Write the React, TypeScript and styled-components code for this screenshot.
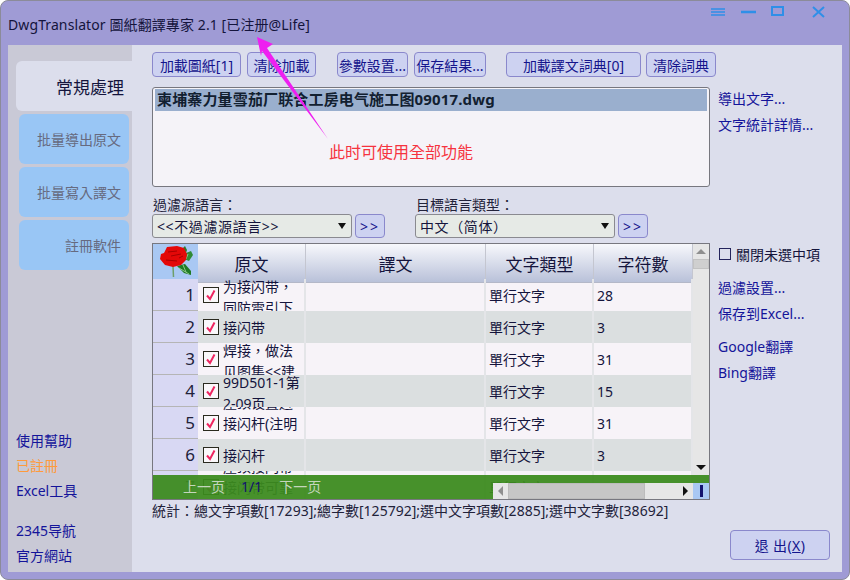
import * as React from 'react';
import styled, { createGlobalStyle } from 'styled-components';

const GlobalStyle = createGlobalStyle`
    html, body {
        margin: 0;
        padding: 0;
        background: #fff;
    }
    body {
        font-family: "Noto Sans", "Noto Sans CJK TC", sans-serif;
        font-size: 14px;
    }
`;

const Window = styled.div`
    position: relative;
    box-sizing: border-box;
    width: 850px;
    height: 580px;
    display: flex;
    flex-direction: column;
    background: #9f9bd5;
    border: 1px solid #8b8b99;
    border-radius: 8px;
    overflow: hidden;
`;

const TitleBar = styled.header`
    height: 44px;
    flex: none;
    display: flex;
    align-items: flex-start;
    justify-content: space-between;
`;

const Title = styled.h1`
    margin: 13px 0 0 7px;
    font-size: 14px;
    line-height: 22px;
    font-weight: 400;
    letter-spacing: 0.1px;
    color: #14143c;
`;

const Controls = styled.div`
    display: flex;
    align-items: flex-start;
    margin: 4px 24px 0 0;
`;

const ControlIcon = styled.svg<{ $gap: number }>`
    display: block;
    margin-left: ${(p) => p.$gap}px;
`;

const Body = styled.div`
    flex: 1;
    display: flex;
    margin: 0 7px 7px 7px;
    min-height: 0;
`;

const Sidebar = styled.aside`
    width: 124px;
    flex: none;
    display: flex;
    flex-direction: column;
    align-items: flex-end;
    background: #c9c9d6;
    padding-top: 16px;
    box-sizing: border-box;
`;

const ActiveTab = styled.div`
    box-sizing: border-box;
    width: 116px;
    height: 50px;
    padding-right: 8px;
    display: flex;
    align-items: center;
    justify-content: flex-end;
    background: #dcdeec;
    border-radius: 6px 0 0 6px;
    font-size: 17px;
    color: #14143c;
`;

const Tab = styled.div`
    box-sizing: border-box;
    width: 110px;
    height: 50px;
    margin: 3px 3px 0 0;
    padding-right: 8px;
    display: flex;
    align-items: center;
    justify-content: flex-end;
    background: #99c6f5;
    border-radius: 6px;
    color: #666a80;
`;

const SideLinks = styled.nav`
    margin-top: auto;
    align-self: stretch;
    padding: 0 0 4px 8px;
`;

const SideLink = styled.div<{ $orange?: boolean; $spaced?: boolean }>`
    line-height: 25px;
    margin-top: ${(p) => (p.$spaced ? 15 : 0)}px;
    color: ${(p) => (p.$orange ? '#ff9a3c' : '#14149a')};
`;

const Main = styled.main`
    flex: 1;
    background: #dcdeec;
    padding: 7px 0 0 20px;
    display: grid;
    grid-template-columns: 558px 1fr;
    grid-template-rows: 25px 110px 56px 257px auto;
    column-gap: 8px;
    align-content: start;
`;

const Toolbar = styled.div`
    grid-column: 1 / 3;
    display: flex;
`;

const Button = styled.button<{ $w: number; $gap?: number }>`
    box-sizing: border-box;
    width: ${(p) => p.$w}px;
    margin-left: ${(p) => p.$gap ?? 0}px;
    padding: 0;
    font: inherit;
    white-space: nowrap;
    color: #14148c;
    background: #cdd2f1;
    border: 1px solid #8a88cc;
    border-radius: 4px;
`;

const ListBox = styled.div`
    box-sizing: border-box;
    margin-top: 10px;
    height: 100px;
    padding: 1px 2px;
    background: #f5f3f8;
    border: 1px solid #77777f;
    border-radius: 3px;
`;

const ListItem = styled.div`
    height: 22px;
    line-height: 20px;
    padding-left: 2px;
    font-weight: 700;
    font-size: 15px;
    letter-spacing: 0.15px;
    color: #122030;
    background: #9aafce;
`;

const LinkColumn = styled.div`
    padding-top: 9px;
`;

const Link = styled.div`
    line-height: 26px;
    color: #14149a;
    white-space: nowrap;
`;

const FilterRow = styled.div`
    grid-column: 1 / 3;
    display: flex;
    padding-top: 9px;
`;

const FilterGroup = styled.div<{ $gap?: number }>`
    margin-left: ${(p) => p.$gap ?? 0}px;
`;

const FilterLabel = styled.div`
    height: 18px;
    line-height: 18px;
    padding-left: 1px;
    color: #22223a;
`;

const FilterControls = styled.div`
    display: flex;
    height: 24px;
    gap: 3px;
`;

const Combo = styled.div`
    box-sizing: border-box;
    width: 200px;
    padding: 0 4px;
    display: flex;
    align-items: center;
    justify-content: space-between;
    color: #14143c;
    letter-spacing: 0.6px;
    background: #e6eae6;
    border: 1px solid #8a8a90;
    border-radius: 3px;
`;

const ComboArrow = styled.span`
    width: 0;
    height: 0;
    border-left: 4.5px solid transparent;
    border-right: 4.5px solid transparent;
    border-top: 6px solid #111;
    margin-right: 1px;
`;

const MoreButton = styled(Button)`
    letter-spacing: 2px;
`;

const Table = styled.div`
    position: relative;
    box-sizing: border-box;
    height: 257px;
    border: 1px solid #77777f;
    background: #e6e6e6;
    overflow: hidden;
    display: flex;
`;

const Grid = styled.div`
    width: 540px;
    flex: none;
`;

const COLUMNS = '45px 108px 180px 108px 99px';

const HeaderRow = styled.div`
    display: grid;
    grid-template-columns: ${COLUMNS};
    height: 35px;
`;

const Corner = styled.div`
    background: #a9c8f3;
`;

const HeaderCell = styled.div`
    display: flex;
    align-items: center;
    justify-content: center;
    font-size: 17px;
    color: #14143c;
    background: linear-gradient(#f7f8fc, #b9c1d9);
    border-right: 1px solid #c4c6d0;
    border-bottom: 1px solid #b4b8c8;
    box-sizing: border-box;
`;

const Row = styled.div<{ $even: boolean }>`
    display: grid;
    grid-template-columns: ${COLUMNS};
    height: 32px;
    background: ${(p) => (p.$even ? '#dbdfe0' : '#f7f3f8')};
`;

const RowNumber = styled.div`
    box-sizing: border-box;
    display: flex;
    align-items: center;
    justify-content: flex-end;
    padding-right: 3px;
    font-size: 17px;
    color: #22223a;
    background: #d8d8f3;
    border-bottom: 1px solid #b5b5b5;
`;

const Cell = styled.div`
    box-sizing: border-box;
    display: flex;
    align-items: center;
    padding-left: 3px;
    overflow: hidden;
    color: #14143c;
    border-right: 2px solid #e4e5e8;
`;

const SourceCell = styled(Cell)`
    gap: 4px;
    padding-left: 4px;
`;

const CheckBox = styled.svg`
    flex: none;
    margin-left: 1px;
`;

// two wrapped lines sit slightly low in their row, the second one runs into the row below
const SourceLines = styled.div<{ $wrapped: boolean }>`
    flex: none;
    white-space: nowrap;
    padding-top: ${(p) => (p.$wrapped ? 4 : 0)}px;
`;

const SourceLine = styled.div`
    height: 21px;
    line-height: 21px;
`;

const VScroll = styled.div`
    width: 16px;
    height: 231px;
    display: flex;
    flex-direction: column;
    background: #e6e6e6;
`;

const ScrollButton = styled.div`
    height: 15px;
    flex: none;
    display: flex;
    align-items: center;
    justify-content: center;
`;

const VThumb = styled.div`
    box-sizing: border-box;
    height: 10px;
    background: #cfcfcf;
    border: 1px solid #c2c2c2;
`;

const VTrack = styled.div`
    flex: 1;
`;

const Triangle = styled.span<{ $dir: 'up' | 'down' | 'left' | 'right'; $color: string }>`
    width: 0;
    height: 0;
    border-style: solid;
    border-color: transparent;
    ${(p) =>
        p.$dir === 'up' || p.$dir === 'down'
            ? `border-width: ${p.$dir === 'up' ? '0 5px 5px' : '5px 5px 0'};`
            : `border-width: ${p.$dir === 'left' ? '5px 5px 5px 0' : '5px 0 5px 5px'};`}
    ${(p) => `border-${{ up: 'bottom', down: 'top', left: 'right', right: 'left' }[p.$dir]}-color: ${p.$color};`}
`;

const PagerBar = styled.div`
    position: absolute;
    left: 0;
    right: 0;
    bottom: 0;
    height: 24px;
    display: flex;
    background: rgba(60, 138, 30, 0.94);
`;

const PagerLink = styled.span<{ $left: number }>`
    margin-left: ${(p) => p.$left}px;
    line-height: 24px;
    color: #c4d6bc;
    white-space: nowrap;
`;

const PagerCount = styled.span<{ $left: number }>`
    margin-left: ${(p) => p.$left}px;
    line-height: 24px;
    color: #12126e;
`;

const HScroll = styled.div`
    margin-left: auto;
    align-self: flex-end;
    width: 216px;
    height: 16px;
    display: flex;
    background: #e6e6e6;
`;

const HButton = styled.div`
    width: 15px;
    flex: none;
    display: flex;
    align-items: center;
    justify-content: center;
`;

const HThumb = styled.div`
    box-sizing: border-box;
    width: 137px;
    background: #c6c6c6;
    border: 1px solid #bcbcbc;
`;

const HTrack = styled.div`
    flex: 1;
`;

const ScrollCorner = styled.div`
    width: 16px;
    flex: none;
    display: flex;
    align-items: center;
    justify-content: center;
    background: #a9c8f3;
    &::after {
        content: '';
        width: 3px;
        height: 12px;
        background: #12126e;
    }
`;

const SideColumn = styled.div`
    padding-top: 0;
`;

const ToggleRow = styled.div`
    display: flex;
    align-items: center;
    gap: 5px;
    height: 22px;
    margin-bottom: 10px;
    color: #14143c;
`;

const ToggleBox = styled.span`
    box-sizing: border-box;
    width: 12px;
    height: 12px;
    margin-left: 1px;
    border: 1px solid #24245c;
`;

const LinkGroup = styled.div`
    margin-bottom: 7px;
`;

const Footer = styled.div`
    grid-column: 1 / 3;
    display: flex;
    flex-direction: column;
`;

const Stats = styled.div`
    line-height: 22px;
    color: #22223a;
    white-space: nowrap;
`;

const ExitButton = styled(Button)`
    height: 30px;
    margin: 8px 0 0 578px;
    letter-spacing: 0.4px;
`;

const Annotation = styled.div`
    position: absolute;
    left: 328px;
    top: 138px;
    font-size: 16px;
    line-height: 26px;
    color: #f5333f;
    white-space: nowrap;
`;

const ArrowDrawing = styled.svg`
    position: absolute;
    left: 250px;
    top: 30px;
`;

const rows = [
    { no: 1, lines: ['为接闪带，', '同防雷引下'], count: '28' },
    { no: 2, lines: ['接闪带'], count: '3' },
    { no: 3, lines: ['焊接，做法', '见图集<<建'], count: '31' },
    { no: 4, lines: ['99D501-1第', '2-09页_'], count: '15' },
    { no: 5, lines: ['屋顶设置避', '接闪杆(注明', ''], count: '31' },
    { no: 6, lines: ['接闪杆'], count: '3' },
    { no: 7, lines: ['屋顶接闪带', '接闪带可靠', ''], count: '12' },
];

const Rose = () => (
    <svg width="45" height="35" viewBox="0 0 45 35">
        <path d="M20 22 L20.5 33" stroke="#6f9f6a" strokeWidth="1.5" fill="none" />
        <path d="M29 5 L32 2 L34 6 L33 9 L29 8 Z" fill="#2c7a2c" />
        <path d="M33 9 L38 7 L40 11 L36 17 L31 15 Z" fill="#2f8a35" />
        <path d="M24 22 L32 20 L38 27 L38 31 L31 29 Z" fill="#1f7a24" />
        <path d="M26 24 L36 30 M30 21 L33 28 M35 10 L33 15" stroke="#a8d8a0" strokeWidth="0.8" fill="none" />
        <path
            d="M14 3 L24 2 L31 4 L34 10 L33 16 L28 21 L20 23 L12 21 L7 15 L8 10 L11 9 Z"
            fill="#e40808"
        />
        <path d="M15 8 L24 7 M18 12 L28 10 M13 16 L24 17 M26 14 L30 12" stroke="#a80000" strokeWidth="1" fill="none" />
    </svg>
);

const Check = () => (
    <CheckBox width="16" height="16" viewBox="0 0 16 16">
        <rect x="0.5" y="0.5" width="15" height="15" fill="#faf8fa" stroke="#2a2a1e" />
        <path d="M4 8.5 L7 12 L11.5 3.5" fill="none" stroke="#ee2560" strokeWidth="2" />
    </CheckBox>
);

function App() {
    return (
        <Window>
            <GlobalStyle />
            <TitleBar>
                <Title>DwgTranslator 圖紙翻譯專家 2.1 [已注册@Life]</Title>
                <Controls>
                    <ControlIcon $gap={0} width="14" height="12" viewBox="0 0 14 12">
                        <path d="M0 4h14M0 7h14M0 10h14" stroke="#2f8fe8" strokeWidth="1.4" />
                    </ControlIcon>
                    <ControlIcon $gap={16} width="15" height="12" viewBox="0 0 15 12">
                        <path d="M0 7h15" stroke="#2f8fe8" strokeWidth="2.5" />
                    </ControlIcon>
                    <ControlIcon $gap={15} width="13" height="12" viewBox="0 0 13 12">
                        <rect x="1" y="2" width="11" height="8" fill="none" stroke="#2f8fe8" strokeWidth="2" />
                    </ControlIcon>
                    <ControlIcon $gap={28} width="13" height="13" viewBox="0 0 13 13">
                        <path d="M1 2l11 10M12 2L1 12" stroke="#2f8fe8" strokeWidth="2" />
                    </ControlIcon>
                </Controls>
            </TitleBar>
            <Body>
                <Sidebar>
                    <ActiveTab>常規處理</ActiveTab>
                    <Tab>批量導出原文</Tab>
                    <Tab>批量寫入譯文</Tab>
                    <Tab>註冊軟件</Tab>
                    <SideLinks>
                        <SideLink>使用幫助</SideLink>
                        <SideLink $orange>已註冊</SideLink>
                        <SideLink>Excel工具</SideLink>
                        <SideLink $spaced>2345导航</SideLink>
                        <SideLink>官方網站</SideLink>
                    </SideLinks>
                </Sidebar>
                <Main>
                    <Toolbar>
                        <Button $w={89}>加載圖紙[1]</Button>
                        <Button $w={69} $gap={6}>清除加載</Button>
                        <Button $w={71} $gap={21}>參數設置...</Button>
                        <Button $w={72} $gap={6}>保存結果...</Button>
                        <Button $w={135} $gap={20}>加載譯文詞典[0]</Button>
                        <Button $w={70} $gap={5}>清除詞典</Button>
                    </Toolbar>
                    <ListBox>
                        <ListItem>柬埔寨力量雪茄厂联合工房电气施工图09017.dwg</ListItem>
                    </ListBox>
                    <LinkColumn>
                        <Link>導出文字...</Link>
                        <Link>文字統計詳情...</Link>
                    </LinkColumn>
                    <FilterRow>
                        <FilterGroup>
                            <FilterLabel>過濾源語言：</FilterLabel>
                            <FilterControls>
                                <Combo>
                                    &lt;&lt;不過濾源語言&gt;&gt;
                                    <ComboArrow />
                                </Combo>
                                <MoreButton $w={30}>&gt;&gt;</MoreButton>
                            </FilterControls>
                        </FilterGroup>
                        <FilterGroup $gap={30}>
                            <FilterLabel>目標語言類型：</FilterLabel>
                            <FilterControls>
                                <Combo>
                                    中文（简体）
                                    <ComboArrow />
                                </Combo>
                                <MoreButton $w={30}>&gt;&gt;</MoreButton>
                            </FilterControls>
                        </FilterGroup>
                    </FilterRow>
                    <Table>
                        <Grid>
                            <HeaderRow>
                                <Corner>
                                    <Rose />
                                </Corner>
                                <HeaderCell>原文</HeaderCell>
                                <HeaderCell>譯文</HeaderCell>
                                <HeaderCell>文字類型</HeaderCell>
                                <HeaderCell>字符數</HeaderCell>
                            </HeaderRow>
                            {rows.map((row) => (
                                <Row key={row.no} $even={row.no % 2 === 0}>
                                    <RowNumber>{row.no}</RowNumber>
                                    <SourceCell>
                                        <Check />
                                        <SourceLines $wrapped={row.lines.length === 2}>
                                            {row.lines.map((line, i) => (
                                                <SourceLine key={i}>{line}</SourceLine>
                                            ))}
                                        </SourceLines>
                                    </SourceCell>
                                    <Cell />
                                    <Cell>單行文字</Cell>
                                    <Cell>{row.count}</Cell>
                                </Row>
                            ))}
                        </Grid>
                        <VScroll>
                            <ScrollButton>
                                <Triangle $dir="up" $color="#8f8f8f" />
                            </ScrollButton>
                            <VThumb />
                            <VTrack />
                            <ScrollButton>
                                <Triangle $dir="down" $color="#111" />
                            </ScrollButton>
                        </VScroll>
                        <PagerBar>
                            <PagerLink $left={30}>上一页</PagerLink>
                            <PagerCount $left={16}>1/1</PagerCount>
                            <PagerLink $left={17}>下一页</PagerLink>
                            <HScroll>
                                <HButton>
                                    <Triangle $dir="left" $color="#8f8f8f" />
                                </HButton>
                                <HThumb />
                                <HTrack />
                                <HButton>
                                    <Triangle $dir="right" $color="#111" />
                                </HButton>
                                <ScrollCorner />
                            </HScroll>
                        </PagerBar>
                    </Table>
                    <SideColumn>
                        <ToggleRow>
                            <ToggleBox />
                            關閉未選中項
                        </ToggleRow>
                        <LinkGroup>
                            <Link>過濾設置...</Link>
                            <Link>保存到Excel...</Link>
                        </LinkGroup>
                        <Link>Google翻譯</Link>
                        <Link>Bing翻譯</Link>
                    </SideColumn>
                    <Footer>
                        <Stats>統計：總文字項數[17293];總字數[125792];選中文字項數[2885];選中文字數[38692]</Stats>
                        <ExitButton $w={100}>
                            退 出(<u>X</u>)
                        </ExitButton>
                    </Footer>
                </Main>
            </Body>
            <Annotation>此时可使用全部功能</Annotation>
            <ArrowDrawing width="80" height="112" viewBox="250 30 80 112">
                <path d="M256 36 L272 43 L266 47 L327 138 L261 50 L260 55 Z" fill="#ee1ff0" />
            </ArrowDrawing>
        </Window>
    );
}

export default App;
